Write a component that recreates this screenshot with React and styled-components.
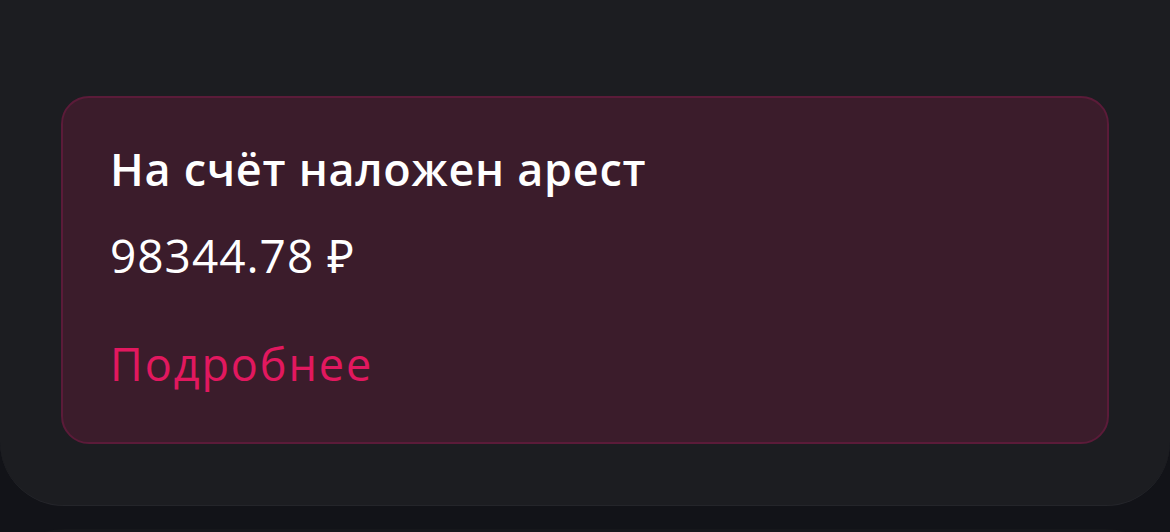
import React from "react";
import styled, { createGlobalStyle } from "styled-components";

const Global = createGlobalStyle`
  html, body { margin: 0; padding: 0; background: #121318; }
  body { font-family: "Open Sans", "Noto Sans", sans-serif; -webkit-font-smoothing: antialiased; }
  * { box-sizing: border-box; }
`;

const Page = styled.div`
  width: 1170px;
  height: 532px;
  overflow: hidden;
  display: flex;
  flex-direction: column;
  gap: 23px;
`;

const Panel = styled.section`
  background: #1c1d21;
  border-radius: 0 0 64px 64px;
  border-bottom: 1px solid #24252a;
  padding: 96px 61px 61px;
`;

const NextPanel = styled.section`
  background: #16171b;
  border-radius: 64px 64px 0 0;
  height: 80px;
  flex-shrink: 0;
`;

const AlertCard = styled.div`
  background: #3b1c2b;
  border: 2px solid #5b1b39;
  border-radius: 28px;
  height: 348px;
  padding: 42px 47px 0;
  display: flex;
  flex-direction: column;
`;

const Title = styled.h2`
  margin: 0;
  font-size: 45px;
  line-height: 58px;
  font-weight: 600;
  color: #ffffff;
  letter-spacing: 0.7px;
`;

const Amount = styled.div`
  margin-top: 28px;
  font-size: 46px;
  line-height: 58px;
  font-weight: 400;
  color: #ffffff;
  letter-spacing: 1px;
`;

const MoreLink = styled.a`
  margin-top: 52px;
  font-size: 45px;
  line-height: 56px;
  color: #e2185f;
  letter-spacing: 1.9px;
  text-decoration: none;
  cursor: pointer;
`;

export default function App() {
  return (
    <Page>
      <Global />
      <Panel>
        <AlertCard>
          <Title>На счёт наложен арест</Title>
          <Amount>98344.78 ₽</Amount>
          <MoreLink>Подробнее</MoreLink>
        </AlertCard>
      </Panel>
      <NextPanel />
    </Page>
  );
}
